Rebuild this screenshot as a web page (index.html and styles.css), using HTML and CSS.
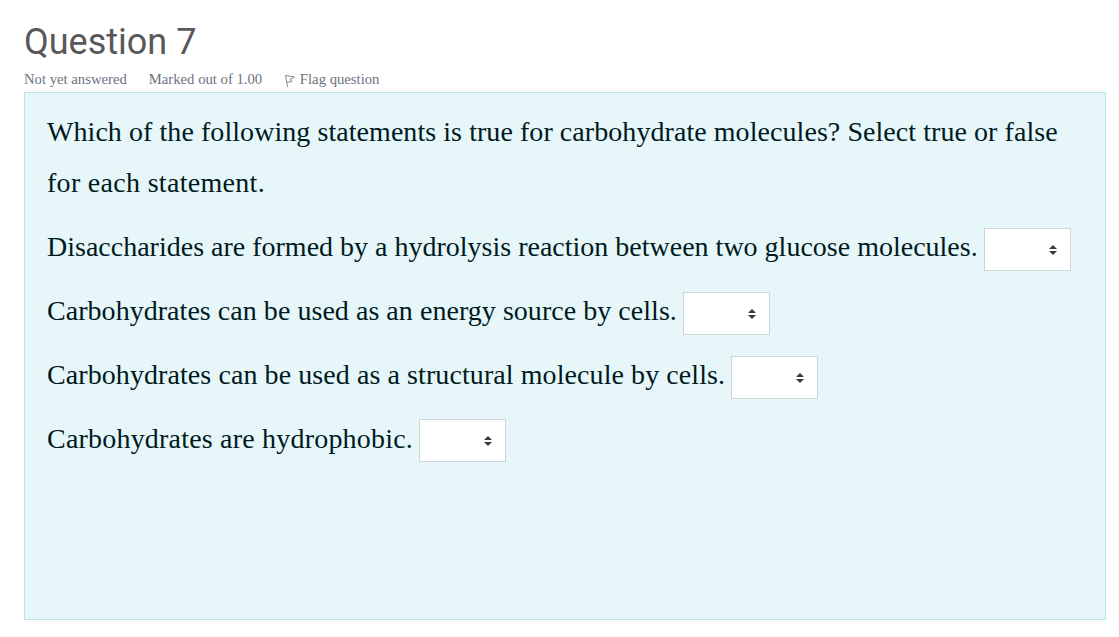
FILE: index.html
```html
<!DOCTYPE HTML>
<html>
<head>
    <meta charset="utf-8">
    <title>Question 7</title>
    <link rel="stylesheet" href="styles.css">
</head>

<body>
    <div id='main'>
        <h3 class='question-title'>Question 7</h3>
        <div class='question-info'>
            <span class='info-item'>Not yet answered</span>
            <span class='info-item'>Marked out of 1.00</span>
            <span class='info-item flag'>
                <svg class='flag-icon' width="12" height="14" viewBox="0 0 12 14">
                    <path d="M1.5 1.5 L10.5 3 L6 5.5 L8 7.5 L2.8 8.5 M1.5 1.5 L3.6 13" fill="none" stroke="#8a8a8a" stroke-width="1"/>
                </svg>
                Flag question
            </span>
        </div>
        <div class='question-box'>
            <p class='question-text'>Which of the following statements is true for carbohydrate molecules? Select true or false <span class='text-end'>for each statement.</span></p>
            <div class='answer-row'>
                <span class='answer-label'>Disaccharides are formed by a hydrolysis reaction between two glucose molecules.</span>
                <span class='select-box'></span>
            </div>
            <div class='answer-row row-energy'>
                <span class='answer-label'>Carbohydrates can be used as an energy source by cells.</span>
                <span class='select-box'></span>
            </div>
            <div class='answer-row row-structural'>
                <span class='answer-label'>Carbohydrates can be used as a structural molecule by cells.</span>
                <span class='select-box'></span>
            </div>
            <div class='answer-row row-short'>
                <span class='answer-label'>Carbohydrates are hydrophobic.</span>
                <span class='select-box'></span>
            </div>
        </div>
    </div>
</body>
</html>
```

FILE: styles.css
```css
html, body{
    margin: 0;
    background-color: white;
}
body{
    font-family: "Liberation Serif", serif;
}
div#main{
    padding: 0 13px 17px 24px;
}
.question-title{
    margin: 0;
    padding-top: 20px;
    height: 44px;
    font-family: Roboto, sans-serif;
    font-size: 36px;
    font-weight: 400;
    line-height: 44px;
    color: #58585a;
}
.question-info{
    display: flex;
    align-items: center;
    height: 28px;
    padding-top: 2px;
    box-sizing: border-box;
    font-size: 14.7px;
    color: #6b7280;
}
.info-item{
    margin-right: 22px;
    white-space: nowrap;
}
.flag-icon{
    vertical-align: -4px;
}
.question-box{
    box-sizing: border-box;
    height: 528px;
    padding: 13px 23px 0 22px;
    background-color: #e6f6f9;
    border: 1px solid #b5e6ea;
    color: #001a1e;
    font-size: 28px;
}
.question-text{
    margin: 0 0 20px 0;
    line-height: 51px;
    letter-spacing: 0.06px;
}
.text-end{
    letter-spacing: 0.3px;
}
.answer-row{
    display: flex;
    align-items: center;
    height: 43px;
    margin-bottom: 21px;
    white-space: nowrap;
}
.answer-label{
    padding-bottom: 5px;
}
.row-energy .answer-label{
    letter-spacing: 0.04px;
}
.row-structural .answer-label{
    letter-spacing: 0.08px;
}
.row-short .answer-label{
    letter-spacing: 0.2px;
}
.row-short .select-box{
    margin-top: -2px;
}
.select-box{
    position: relative;
    box-sizing: border-box;
    width: 87px;
    height: 43px;
    margin-left: 6px;
    background-color: white;
    border: 1px solid #ced4da;
}
.select-box::before, .select-box::after{
    content: '';
    position: absolute;
    right: 13px;
    border-left: 4px solid transparent;
    border-right: 4px solid transparent;
}
.select-box::before{
    top: 16px;
    border-bottom: 4px solid #343a40;
}
.select-box::after{
    top: 22px;
    border-top: 4px solid #343a40;
}
```
